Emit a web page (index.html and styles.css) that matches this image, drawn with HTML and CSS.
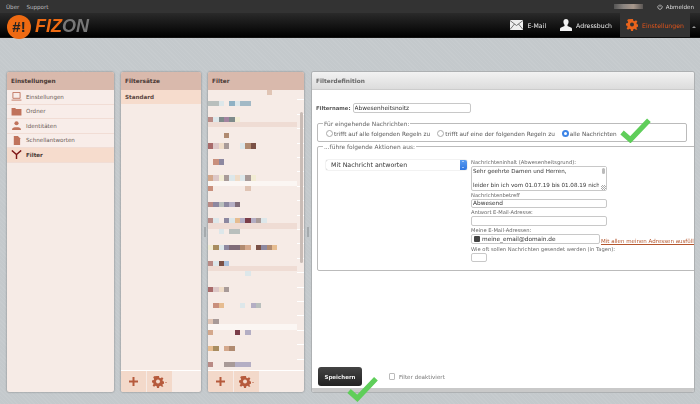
FILE: index.html
```html
<!DOCTYPE html>
<html lang="de">
<head>
    <meta charset="UTF-8">
    <title>FIZON - Einstellungen</title>
    <link rel="stylesheet" href="styles.css">
</head>
<body>
    <div class="topbar">
        <div class="topbar-left"><a>Über</a><a>Support</a></div>
        <div class="topbar-right">
            <span class="username"></span>
            <svg class="power" viewBox="0 0 10 10"><path d="M3 2.2a3.6 3.6 0 1 0 4 0M5 .8v4" fill="none" stroke="#ddd" stroke-width="1.2"/></svg>
            <a>Abmelden</a>
        </div>
    </div>
    <header class="navbar">
        <div class="logo">
            <span class="logo-badge">#!</span>
            <span class="logo-text">FIZ<span class="logo-grey">ON</span></span>
        </div>
        <nav class="tabs">
            <a class="tab">
                <svg width="13" height="10" viewBox="0 0 13 10"><rect width="13" height="10" fill="#eee"/><path d="M0 .5l6.5 5 6.5-5M0 9.5l4.5-5.5M13 9.5L8.5 4" fill="none" stroke="#555" stroke-width=".8"/></svg>
                E-Mail
            </a>
            <a class="tab">
                <svg width="12" height="12" viewBox="0 0 12 12"><path d="M6 0c1.700 0 2.600 1.200 2.600 2.800 0 1.300-.6 2.300-1.100 3v1.200l3.500 1.500c.6.3 1 .7 1 1.500v2H0v-2c0-.8.4-1.200 1-1.500L4.500 7V5.800c-.5-.7-1.100-1.700-1.100-3C3.400 1.200 4.300 0 6 0z" fill="#f2f2f2"/></svg>
                Adressbuch
            </a>
            <a class="tab active">
                <svg width="12" height="12" viewBox="0 0 12 12"><path d="M5 0h2l.3 1.700 1.200.5L10 1.200l1.400 1.400-1 1.500.5 1.200 1.700.3v2l-1.700.3-.5 1.200 1 1.500L10 10.800l-1.500-1-1.200.5L7 12H5l-.3-1.700-1.200-.5-1.500 1L.6 9.400l1-1.500-.5-1.200L0 6.400v-2l1.700-.3.5-1.200-1-1.500L2 .2z" fill="#e8641c"/><circle cx="6" cy="5.500" r="2" fill="#333"/></svg>
                Einstellungen
            </a>
            <span class="tab-arrow"></span>
        </nav>
    </header>

    <main class="workspace">
        <section class="panel panel-settings">
            <h2 class="panel-title">Einstellungen</h2>
            <ul class="menu">
                <li><svg viewBox="0 0 12 10"><path d="M2 .5h8v6.500H2zM.5 9h11" fill="none" stroke="#c0735c" stroke-width="1"/></svg>Einstellungen</li>
                <li><svg viewBox="0 0 12 10"><path d="M.5 1h4l1 1.200h6V9.500H.5z" fill="#c0735c"/></svg>Ordner</li>
                <li><svg viewBox="0 0 12 10"><circle cx="6" cy="2.500" r="2.300" fill="#c0735c"/><path d="M1 10c0-2.500 2-3 5-3s5 .5 5 3z" fill="#c0735c"/></svg>Identitäten</li>
                <li><svg viewBox="0 0 12 10"><path d="M3 0h4.500L10 2.500V10H3z" fill="#c0735c"/></svg>Schnellantworten</li>
                <li class="active"><svg viewBox="0 0 12 10"><path d="M.8.500L6 5l5.200-4.500M6 5v5" fill="none" stroke="#7d1616" stroke-width="1.600"/></svg>Filter</li>
            </ul>
        </section>

        <section class="panel panel-sets">
            <h2 class="panel-title">Filtersätze</h2>
            <div class="set-item">Standard</div>
            <div class="panel-tools">
                <button class="tool"><svg width="9" height="9" viewBox="0 0 9 9"><path d="M4.500 0v9M0 4.500h9" stroke="#b65a3c" stroke-width="2"/></svg></button>
                <button class="tool"><svg width="12" height="12" viewBox="0 0 12 12"><path d="M5 0h2l.3 1.700 1.200.5L10 1.200l1.400 1.400-1 1.500.5 1.200 1.700.3v2l-1.700.3-.5 1.200 1 1.500L10 10.800l-1.500-1-1.200.5L7 12H5l-.3-1.700-1.200-.5-1.500 1L.6 9.400l1-1.500-.5-1.200L0 6.400v-2l1.700-.3.5-1.200-1-1.500L2 .2z" fill="#b65a3c"/><circle cx="6" cy="5.500" r="2" fill="#f3d9ca"/></svg><span class="caret"></span></button>
            </div>
        </section>

        <div class="splitter"></div>

        <section class="panel panel-filters">
            <h2 class="panel-title">Filter</h2>
            <div class="filter-list">
                <div class="cells"><i></i><i></i><i></i><i></i><i></i><i></i><i></i><i></i><i></i><i></i><i></i><i class="a"></i></div>
                <div class="cells skip1"><i class="b"></i><i class="b"></i><i class="c"></i><i></i><i class="d"></i><i class="c"></i><i class="e"></i><i class="e"></i></div>
                <div class="cells skip2"><i class="f"></i><i class="c"></i><i class="g"></i><i class="h"></i><i class="g"></i><i class="ic"></i></div>
                <div class="stripe"></div>
                <div class="cells skip1"><i></i><i></i><i></i><i class="j"></i></div>
                <div class="cells skip1"><i class="o2"></i><i class="k"></i><i class="l"></i><i class="m"></i><i></i><i></i><i class="c"></i><i class="j"></i><i class="n"></i></div>
                <div class="cells skip2"><i></i><i class="o"></i><i class="p"></i></div>
                <div class="cells skip2"><i class="q"></i><i class="k"></i><i class="ic"></i><i class="m"></i><i class="c"></i><i class="l"></i><i class="c"></i><i class="m"></i><i class="ic"></i></div>
                <div class="stripe light"></div>
                <div class="cells"><i class="o"></i><i></i><i></i><i></i><i></i><i></i><i></i><i class="a"></i></div>
                <div class="cells skip2"><i class="f"></i><i class="p"></i><i class="b"></i><i class="p"></i><i class="s"></i><i class="r2"></i></div>
                <div class="cells skip2"><i class="f"></i><i class="c"></i><i></i><i class="p"></i><i class="c"></i><i class="v"></i><i class="s"></i><i class="r"></i><i class="s"></i><i class="m"></i><i class="c"></i></div>
                <div class="stripe"></div>
                <div class="cells"><i></i><i></i><i class="c"></i><i></i><i class="b"></i><i class="b"></i></div>
                <div class="cells skip2"><i class="ic"></i><i class="t"></i><i class="c"></i><i class="p"></i><i class="r2"></i><i class="r2"></i><i class="j"></i><i class="q"></i><i></i><i class="n"></i><i class="p"></i><i class="j"></i><i class="v"></i></div>
                <div class="cells skip2"><i class="f"></i><i class="c"></i><i class="n"></i><i class="u"></i></div>
                <div class="stripe"></div>
                <div class="cells"><i></i><i></i><i></i><i></i><i></i><i></i><i></i><i class="c"></i></div>
                <div class="cells skip2"><i class="o2"></i><i class="k"></i><i class="l"></i><i class="m"></i></div>
                <div class="cells skip2"><i></i><i class="o"></i><i class="v"></i><i></i><i></i><i></i><i class="c"></i><i></i><i class="s"></i><i class="b"></i></div>
                <div class="cells skip2"><i class="a"></i><i class="m"></i></div>
                <div class="stripe light"></div>
                <div class="cells"><i class="q"></i><i></i><i></i><i></i><i></i><i class="r"></i><i></i><i class="s"></i></div>
                <div class="cells skip2"><i class="v"></i><i class="t"></i><i></i><i class="q"></i><i class="j"></i></div>
                <div class="cells skip2"><i class="f"></i><i></i><i></i><i class="m"></i><i class="m"></i><i class="s"></i><i class="s"></i><i class="s"></i></div>
            </div>
            <span class="list-ticks"></span>
            <span class="list-scrollbar"></span>
            <div class="panel-tools">
                <button class="tool"><svg width="9" height="9" viewBox="0 0 9 9"><path d="M4.500 0v9M0 4.500h9" stroke="#b65a3c" stroke-width="2"/></svg></button>
                <button class="tool"><svg width="12" height="12" viewBox="0 0 12 12"><path d="M5 0h2l.3 1.700 1.200.5L10 1.200l1.400 1.400-1 1.500.5 1.200 1.700.3v2l-1.700.3-.5 1.200 1 1.500L10 10.800l-1.500-1-1.200.5L7 12H5l-.3-1.700-1.200-.5-1.500 1L.6 9.400l1-1.500-.5-1.200L0 6.400v-2l1.700-.3.5-1.200-1-1.500L2 .2z" fill="#b65a3c"/><circle cx="6" cy="5.500" r="2" fill="#f3d9ca"/></svg><span class="caret"></span></button>
            </div>
        </section>

        <div class="splitter"></div>

        <section class="panel panel-definition">
            <h2 class="panel-title">Filterdefinition</h2>
            <div class="definition-body">
                <div class="name-row">
                    <label>Filtername:</label>
                    <input type="text" value="Abwesenheitsnoitz">
                </div>

                <fieldset class="group-rules">
                    <legend>Für eingehende Nachrichten:</legend>
                    <label class="choice"><input type="radio" name="scope">trifft auf alle folgenden Regeln zu</label>
                    <label class="choice"><input type="radio" name="scope">trifft auf eine der folgenden Regeln zu</label>
                    <label class="choice"><input type="radio" name="scope" checked>alle Nachrichten</label>
                </fieldset>

                <fieldset class="group-actions">
                    <legend>...führe folgende Aktionen aus:</legend>
                    <div class="fake-select">Mit Nachricht antworten<span class="stepper"></span></div>
                    <div class="action-fields">
                        <label>Nachrichteninhalt (Abwesenheitsgrund):</label>
                        <div class="reply-wrap">
                            <textarea class="reply-text" wrap="off">Sehr geehrte Damen und Herren,

leider bin ich vom 01.07.19 bis 01.08.19 nicht</textarea>
                            <span class="reply-track"></span>
                        </div>
                        <label>Nachrichtenbetreff</label>
                        <input type="text" value="Abwesend">
                        <label>Antwort E-Mail-Adresse:</label>
                        <input type="text">
                        <label>Meine E-Mail-Adressen:</label>
                        <div class="address-row">
                            <div class="address-box"><span class="address-tag"></span>meine_email@domain.de</div>
                            <a class="all-link">Mit allen meinen Adressen ausfüllen</a>
                        </div>
                        <label>Wie oft sollen Nachrichten gesendet werden (in Tagen):</label>
                        <input class="days" type="text">
                    </div>
                </fieldset>
            </div>
            <div class="definition-foot">
                <button class="save">Speichern</button>
                <label class="disable"><input type="checkbox">Filter deaktiviert</label>
            </div>
        </section>
    </main>

    <!-- Haken liegen über dem Inhalt -->
    <svg class="check check-rules" viewBox="0 0 30 24"><path d="M2 14l8 7L28 2" fill="none" stroke="#5fce5a" stroke-width="5"/></svg>
    <svg class="check check-save" viewBox="0 0 30 24"><path d="M2 14l8 7L28 2" fill="none" stroke="#5fce5a" stroke-width="5"/></svg>
</body>
</html>
```

FILE: styles.css
```css
* {
    box-sizing: border-box;
    margin: 0;
    padding: 0;
}

html, body {
    height: 100%;
    overflow: hidden;
}

body {
    font-family: "DejaVu Sans", sans-serif;
    font-size: 5.6px;
    color: #555;
    background-color: #c4c9cc;
    background-image: repeating-linear-gradient(45deg, rgba(255,255,255,0.05) 0 1px, transparent 1px 3px);
    position: relative;
    display: flex;
    flex-direction: column;
    filter: blur(0.3px);
}

/* Kopfbereich */
.topbar {
    height: 13px;
    flex: none;
    background: #333;
    display: flex;
    justify-content: space-between;
    align-items: center;
    padding: 0 6px;
    color: #bbb;
}

.topbar-left {
    display: flex;
    gap: 7px;
}

.topbar-right {
    display: flex;
    align-items: center;
    color: #ddd;
}

.username {
    width: 29px;
    height: 5px;
    margin-right: 14px;
    background: linear-gradient(90deg, #555, #8a8480, #a8988c, #5a5654);
}

.power {
    width: 6px;
    height: 6px;
    margin-right: 3px;
}

.navbar {
    height: 25px;
    flex: none;
    background: linear-gradient(#2a2a2a, #000);
    border-bottom: 1px solid #111;
    display: flex;
    justify-content: space-between;
    padding-left: 7px;
}

.logo {
    display: flex;
    align-items: center;
    gap: 4px;
}

.logo-badge {
    width: 24px;
    height: 24px;
    margin-top: 3px;
    border-radius: 50%;
    background: #ee6a12;
    color: #222;
    font: bold 15px "Liberation Sans", sans-serif;
    display: flex;
    align-items: center;
    justify-content: center;
}

.logo-text {
    font: italic bold 18px "Liberation Sans", sans-serif;
    color: #ee6a12;
    margin-top: 3px;
}

.logo-grey {
    color: #777;
}

.tabs {
    display: flex;
    align-items: stretch;
}

.tab {
    display: flex;
    align-items: center;
    gap: 4px;
    padding: 0 5px 0 6px;
    margin-right: 3px;
    color: #eee;
    font-size: 6.2px;
}

.tab.active {
    background: #333;
    color: #e2541a;
    margin-right: 0;
    width: 70px;
}

.tab-arrow {
    width: 10px;
    position: relative;
}

.tab-arrow::after {
    content: "";
    position: absolute;
    left: 2px;
    top: 11px;
    border: 2px solid transparent;
    border-bottom-color: #999;
}

/* Spalten */
.workspace {
    flex: none;
    height: 320px;
    margin-top: 34px;
    padding-left: 7px;
    display: flex;
}

.panel {
    position: relative;
    display: flex;
    flex-direction: column;
    flex: none;
    background: #f6ebe6;
    border-radius: 2px;
    box-shadow: 0 0 2px rgba(0, 0, 0, 0.45);
    overflow: hidden;
}

.panel-settings { width: 107px; }
.panel-sets {
    width: 80px;
    margin-left: 7px;
}
.panel-filters { width: 96px; }
.panel-definition {
    width: 382px;
    margin-left: 1px;
    background: #fff;
    box-shadow: 0 0 0 1px #adb0b2;
}

.splitter {
    width: 7px;
    flex: none;
    display: flex;
    align-items: center;
    justify-content: center;
}

.splitter::before {
    content: "";
    width: 2px;
    height: 10px;
    background: #a5aaad;
}

.panel-title {
    height: 18px;
    flex: none;
    padding-left: 4px;
    line-height: 18px;
    font-size: 5.8px;
    font-weight: bold;
    color: #4a3a36;
    background: #d9b9ac;
}

.panel-definition .panel-title {
    color: #666;
    background: linear-gradient(#f2f2f2, #dcdcdc);
    border-bottom: 1px solid #ccc;
}

/* Einstellungen */
.menu {
    list-style: none;
}

.menu li {
    height: 14.5px;
    display: flex;
    align-items: center;
    gap: 4px;
    padding-left: 4px;
    background: #f8ede9;
    border-bottom: 1px solid #f1ddd5;
    color: #6a5a56;
}

.menu li.active {
    background: #f6dccd;
    font-weight: bold;
    color: #4a3a36;
}

.menu svg {
    width: 11px;
    height: 9px;
}

/* Filtersätze */
.set-item {
    height: 14px;
    line-height: 14px;
    padding-left: 4px;
    font-weight: bold;
    color: #5a4540;
    background: #f6dccd;
}

.panel-tools {
    margin-top: auto;
    height: 22px;
    flex: none;
    display: flex;
    gap: 1px;
    border-top: 1px solid #fff;
}

.tool {
    width: 25px;
    border: 0;
    background: #f3d9ca;
    display: flex;
    align-items: center;
    justify-content: center;
    gap: 1px;
}

.caret {
    border: 1.5px solid transparent;
    border-top-color: #b65a3c;
    margin-top: 2px;
}

/* Filterliste, unkenntlich gemachte Zeilen */
.filter-list {
    height: 277px;
    flex: none;
    overflow: hidden;
}

.cells {
    height: 5.33px;
    display: flex;
}

.skip1 { margin-top: 5.33px; }
.skip2 { margin-top: 10.67px; }

.cells i {
    display: block;
    width: 5.33px;
    height: 5.33px;
}

.stripe {
    height: 5.33px;
    width: 89px;
    background: #efdcd4;
}

.stripe.light {
    background: #fbf6f3;
}

.a { background: #e0c4b4; }
.b { background: #b9bfbd; }
.c { background: #dde7ea; }
.d { background: #8fb1c4; }
.e { background: #a3b9c6; }
.f { background: #b98a85; }
.g { background: #7e8a8a; }
.h { background: #a283a0; }
.ic { background: #f2ecd4; }
.j { background: #b08a70; }
.k { background: #ddc8c8; }
.l { background: #efdcc8; }
.m { background: #a89a98; }
.n { background: #7a5045; }
.o { background: #c98f7c; }
.o2 { background: #a86a6a; }
.p { background: #8d88a0; }
.q { background: #d4a88c; }
.r { background: #7a3c48; }
.r2 { background: #806c78; }
.s { background: #b4aec4; }
.t { background: #a88c60; }
.u { background: #a8c0dc; }
.v { background: #e6bc90; }

.list-ticks {
    position: absolute;
    right: 0;
    top: 18px;
    width: 7px;
    height: 277px;
    background: repeating-linear-gradient(transparent 0 13.4px, #fff 13.4px 14.4px);
    background-position: 0 -4px;
}

.list-scrollbar {
    position: absolute;
    left: 92px;
    top: 40px;
    width: 3px;
    height: 151px;
    background: #c9bcb6;
    border-radius: 2px;
}

/* Filterdefinition */
.definition-body {
    flex: 1;
    padding: 13px 0 0 4px;
    min-height: 0;
}

.name-row {
    display: flex;
    align-items: center;
    gap: 2px;
    font-size: 5.3px;
    font-weight: bold;
}

.name-row input {
    width: 118px;
    font-size: 6.4px;
}

input[type="text"], textarea {
    font-family: "DejaVu Sans", sans-serif;
    font-size: 5.8px;
    color: #333;
    height: 9.5px;
    padding: 0 1px;
    border: 1px solid #c8c8c8;
    border-radius: 2px;
    background: #fff;
    outline: 0;
}

fieldset {
    border: 1px solid #bbb;
    border-radius: 2px;
    margin-left: 1px;
}

legend {
    margin-left: -3px;
    padding: 0 1px;
    font-size: 5.9px;
    color: #666;
}

.group-rules {
    width: 370px;
    height: 21px;
    margin-top: 8px;
    padding: 0 0 0 8px;
    display: flex;
    gap: 7px;
    font-size: 5.75px;
}

.choice {
    display: flex;
    align-items: center;
    gap: 1px;
}

.choice input {
    appearance: none;
    width: 7px;
    height: 7px;
    border: 1px solid #aaa;
    border-radius: 50%;
    background: #fff;
}

.choice input:checked {
    background: #fff;
    border: 2.500px solid #3d84e6;
}

.group-actions {
    width: 395px;
    height: 127px;
    margin-top: 2px;
    padding: 10px 0 0 8px;
    display: flex;
    gap: 4px;
}

.fake-select {
    position: relative;
    flex: none;
    width: 141px;
    height: 10px;
    line-height: 10px;
    padding-left: 5px;
    font-size: 6.3px;
    background: #fff;
    border-radius: 2px;
    box-shadow: 0 0 1px rgba(0, 0, 0, 0.5);
    color: #333;
}

.stepper {
    position: absolute;
    right: 0;
    top: 0;
    width: 7px;
    height: 10px;
    background: linear-gradient(#5a9cf0, #2f76e0);
    border-radius: 0 2px 2px 0;
}

.stepper::before,
.stepper::after {
    content: "";
    position: absolute;
    left: 2px;
    border: 1.500px solid transparent;
}

.stepper::before {
    top: 0.5px;
    border-bottom-color: #fff;
}

.stepper::after {
    bottom: 0.5px;
    border-top-color: #fff;
}

.action-fields {
    width: 223px;
    margin-top: -1px;
    display: flex;
    flex-direction: column;
    align-items: flex-start;
}

.action-fields label {
    height: 7px;
    line-height: 7px;
    font-size: 5.2px;
    color: #666;
    white-space: nowrap;
}

.action-fields input {
    width: 136px;
    margin-bottom: 1px;
}

.action-fields input.days {
    width: 16px;
}

.reply-wrap {
    position: relative;
    margin-bottom: 1px;
}

.reply-text {
    display: block;
    width: 136px;
    height: 25px;
    padding-top: 1px;
    line-height: 7px;
    font-size: 5.6px;
    overflow: hidden;
    resize: none;
}

.reply-track {
    position: absolute;
    right: 1px;
    top: 1px;
    bottom: 1px;
    width: 7px;
    background: #fff;
}

.reply-track::before {
    content: "";
    position: absolute;
    right: 1px;
    top: 1px;
    width: 3px;
    height: 6px;
    background: #bbb;
    border-radius: 2px;
}

.reply-track::after {
    content: "";
    position: absolute;
    right: 0;
    bottom: 0;
    width: 5px;
    height: 5px;
    background: repeating-linear-gradient(135deg, transparent 0 1px, #aaa 1px 1.500px);
}

.address-row {
    display: flex;
    align-items: flex-end;
    white-space: nowrap;
    margin-bottom: 2px;
}

.address-box {
    width: 129px;
    height: 10px;
    display: flex;
    align-items: center;
    gap: 2px;
    padding-left: 2px;
    font-size: 5.8px;
    color: #333;
    border: 1px solid #c8c8c8;
    border-radius: 2px;
}

.address-tag {
    width: 6px;
    height: 6px;
    background: #444;
    border-radius: 1px;
}

.all-link {
    color: #b4552c;
    font-size: 5.5px;
    text-decoration: underline;
    margin-left: 1px;
}

.definition-foot {
    height: 25px;
    flex: none;
    display: flex;
    align-items: flex-start;
    padding-left: 6px;
    border-bottom: 4px solid #c9c9c9;
}

.save {
    width: 44px;
    height: 19px;
    border: 0;
    border-radius: 3px;
    font: bold 5.500px "DejaVu Sans", sans-serif;
    color: #eee;
    background: linear-gradient(#444, #222);
}

.disable {
    display: flex;
    align-items: center;
    gap: 4px;
    margin: 6px 0 0 27px;
    color: #777;
}

.disable input {
    appearance: none;
    width: 6px;
    height: 7px;
    border: 1px solid #bbb;
    border-radius: 1px;
    background: #fff;
}

.check {
    position: absolute;
}

.check-rules {
    left: 620px;
    top: 118px;
    width: 31px;
    height: 25px;
}

.check-save {
    left: 347px;
    top: 375px;
    width: 31px;
    height: 28px;
}
```
